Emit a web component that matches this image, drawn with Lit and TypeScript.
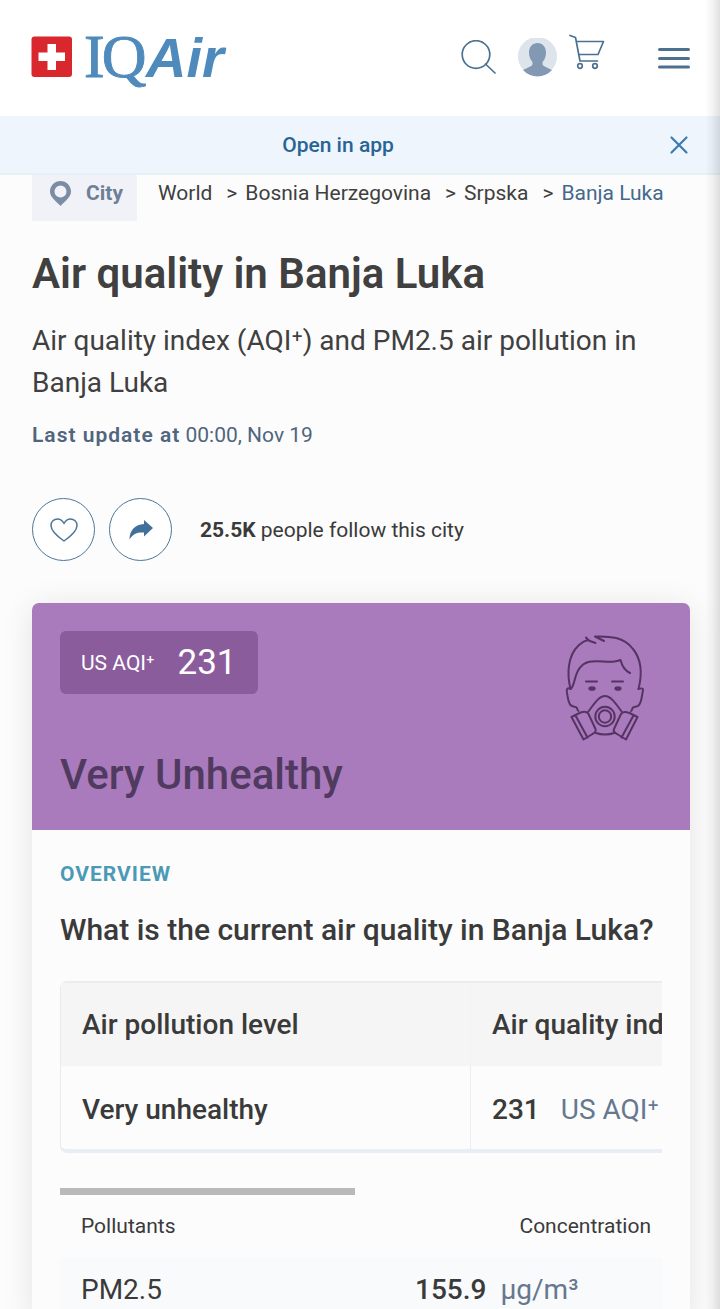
import { LitElement, html, css, svg } from "lit";
import { customElement } from "lit/decorators.js";

const crumbs = ["World", "Bosnia Herzegovina", "Srpska", "Banja Luka"];

@customElement("site-header")
class SiteHeader extends LitElement {
  static styles = css`
    :host { display: block; position: sticky; top: 0; z-index: 2; }
    * { box-sizing: border-box; }
    .bar { height: 116px; background: #fff; display: flex; align-items: center; justify-content: space-between; padding: 0 29px 0 31px; }
    .home { display: block; }
    .logo { display: block; width: 204px; height: 100px; }
    .tools { display: flex; align-items: center; }
    button { border: 0; background: none; padding: 0; display: block; font: inherit; cursor: pointer; }
    svg { display: block; }
    .user { margin-left: 21px; }
    .cart { margin: 0 52px 12px 11px; }
    .banner { min-height: 59px; background: #eef5fd; border-bottom: 2px solid #e9eff6; display: flex; align-items: center; padding: 0 30px 0 8px; }
    .open { flex: 1; text-align: center; font-size: 21px; line-height: 28px; font-weight: 500; color: #286494; text-decoration: none; }
  `;
  render() {
    return html`
      <header class="bar">
        <a class="home" href="#" aria-label="IQAir">
          <svg class="logo" viewBox="0 -20 204 100">
            <rect x="0.500" y="8.500" width="40.500" height="40.500" rx="3" fill="#d9272e" />
            <path d="M16.500 16h8.500v8.500h9V33h-9v9h-8.500v-9h-9v-8.500h9z" fill="#fff" />
            <text y="49" fill="#4f8abc">
              <tspan x="53" dx="0 -3" font-family="Liberation Serif, serif" font-size="62" stroke="#4f8abc" stroke-width="0.900">IQ</tspan><tspan x="115" font-family="Liberation Sans, sans-serif" font-size="56" font-weight="700" font-style="italic">Air</tspan>
            </text>
          </svg>
        </a>
        <div class="tools">
          <button aria-label="Search">
            <svg width="36" height="36" viewBox="0 0 36 36" fill="none" stroke="#4c7190" stroke-width="1.700" stroke-linecap="round">
              <circle cx="15" cy="14.500" r="13.800" /><path d="M24.500 24l9.500 9" />
            </svg>
          </button>
          <button class="user" aria-label="Account">
            <svg width="40" height="40" viewBox="0 0 40 40">
              <circle cx="19.500" cy="18.500" r="19.500" fill="#dde4ec" />
              <path d="M19.500 5c5 0 8.500 4 8.500 9.500 0 4-1.500 7.500-3.500 9.500v2c0 2 3 2.700 9.500 6a19.500 19.500 0 0 1-29 0c6.500-3.300 9.500-4 9.500-6v-2c-2-2-3.500-5.500-3.500-9.500C11 9 14.500 5 19.500 5z" fill="#8298b3" />
            </svg>
          </button>
          <button class="cart" aria-label="Cart">
            <svg width="36" height="36" viewBox="0 0 36 36" fill="none" stroke="#4c7190" stroke-width="1.700" stroke-linecap="round" stroke-linejoin="round">
              <path d="M1 1.500l5.500 2L11 27h17.500M7.500 7.500h27L29 20.500H9.700" />
              <circle cx="11" cy="32" r="2.300" /><circle cx="26" cy="32" r="2.300" />
            </svg>
          </button>
          <button aria-label="Menu">
            <svg width="34" height="24" viewBox="0 0 34 24" stroke="#4c7190" stroke-width="3" stroke-linecap="round">
              <path d="M2.500 3.500h29M2.500 12.500h29M2.500 21h29" />
            </svg>
          </button>
        </div>
      </header>
      <div class="banner">
        <a class="open" href="#">Open in app</a>
        <button aria-label="Close">
          <svg width="22" height="22" viewBox="0 0 22 22" stroke="#3a7cb0" stroke-width="2.200" stroke-linecap="round">
            <path d="M3.500 3.500l15 15M18.500 3.500l-15 15" />
          </svg>
        </button>
      </div>
    `;
  }
}

const maskFace = svg`
  <g fill="none" stroke="#553463" stroke-width="2" stroke-linecap="round" stroke-linejoin="round">
    <path d="M5.500 54C2 40 2 21 14 10c3-2.800 6-4.500 9.500-5.200M21 2.500l2.500 3 7 2.500" />
    <path d="M30 1.500l9 4.500M30 1.500C45 1 59 2 68 14c9 11 9 26 5.500 40" />
    <path d="M5.500 54c5-3 3-16 11-23 8-8 23-3 33-4.500 4-.6 6-1.500 6-1.500 1.500 6 4 10.500 9.500 13" />
    <path d="M5.500 54c-4-2-4 1-3.500 4 1 5 1 9 3.500 12 2 2.500 5 1 6 2.500 1 1 .5 2.500 2 3.500M73.500 54c6-2 4.500 1 4 4-1 5-1 9-3.500 12-2 2.500-4.500 1-6 2.500-1 1-.5 2.500-2 3.500" />
    <path d="M21 46.500h11M47 46.500h11" />
    <path d="M23 77C29 69 34 61 40 61s11 8 17 16M31 98c5 2 13 2 18 0" />
    <path d="M6.500 82l8-4c4-1.500 7.500-2 9 1l7 15c1 2-1 4-3 5l-9 5.500zM72.500 82l-8-4c-4-1.500-7-2-8.500 1l-7 15c-1 2 1 4 3 5l9 5.500z" />
    <path d="M10.500 80.500l12 22M68.500 80.500l-12 22" />
    <circle cx="40" cy="81.500" r="9.700" /><circle cx="40" cy="81.500" r="6.200" />
  </g>
  <ellipse cx="27" cy="53.500" rx="3.600" ry="2.300" fill="#553463" />
  <ellipse cx="53" cy="53.500" rx="3.600" ry="2.300" fill="#553463" />`;

@customElement("aqi-card")
class AqiCard extends LitElement {
  static styles = css`
    :host { display: block; background: #fcfcfc; border-radius: 7px; box-shadow: 0 4px 32px rgba(0, 0, 0, 0.1); color: #3a3a3a; }
    * { box-sizing: border-box; }
    h2, h3, p { margin: 0; }
    .hero { background: #a97abc; border-radius: 7px 7px 0 0; padding: 28px 28px 30px; display: flex; justify-content: space-between; }
    .badge { display: inline-flex; align-items: center; gap: 23px; height: 63px; padding: 0 21px; border-radius: 6px; background: #8a5c9b; color: #fff; font-size: 21px; margin-bottom: 56px; }
    .badge strong { font-size: 35px; font-weight: 400; }
    .level { font-size: 42px; line-height: 50px; font-weight: 500; color: #513a5f; }
    .face { width: 80px; height: 108px; margin: 4px 17px 0 0; flex: none; }
    .body { padding: 30px 28px 0; }
    .kicker { font-size: 21px; line-height: 28px; font-weight: 700; letter-spacing: 1px; color: #4b9ab5; text-transform: uppercase; }
    h3 { font-size: 30px; line-height: 42px; font-weight: 500; margin: 21px 0 30px; }
    table { border-collapse: separate; border-spacing: 0; text-align: left; }
    .scroller { overflow: hidden; }
    .levels { width: 1232px; table-layout: fixed; font-size: 28px; line-height: 42px; border: 1px solid #e8eaee; border-top: 2px solid #ececee; border-bottom: 4px solid #e8edf6; border-radius: 7px; }
    .levels th, .levels td { padding: 21px 21px 20px; font-weight: 500; white-space: nowrap; }
    .levels th { background: #f5f5f5; }
    .levels td { padding: 23px 21px 18px; }
    .levels tr > * + * { border-left: 1px solid #eaeef4; }
    .levels th + th { border-color: #f2f2f2; }
    .levels col.first { width: 409px; }
    .unit { font-weight: 400; color: #667890; margin-left: 14px; }
    .levels .unit { margin-left: 21px; }
    .track { margin-top: 35px; }
    .thumb { width: 49%; height: 7px; background: #b9b9b9; }
    .pollutants { width: 100%; font-size: 28px; line-height: 42px; }
    .pollutants th { font-size: 21px; line-height: 28px; font-weight: 400; padding: 17px 11px 18px 21px; }
    .pollutants th + th { text-align: right; }
    .pollutants td { background: #f9fafc; padding: 11px 21px; }
    .pollutants td b { font-weight: 500; }
    .pollutants col.value { width: 268px; }
  `;
  render() {
    return html`
      <section class="hero">
        <div>
          <p class="badge"><span>US AQI⁺</span><strong>231</strong></p>
          <h2 class="level">Very Unhealthy</h2>
        </div>
        <svg class="face" viewBox="0 0 80 108" overflow="visible" aria-hidden="true">${maskFace}</svg>
      </section>
      <section class="body">
        <p class="kicker">Overview</p>
        <h3>What is the current air quality in Banja Luka?</h3>
        <div class="scroller">
          <table class="levels">
            <colgroup><col class="first" /><col /></colgroup>
            <thead><tr><th>Air pollution level</th><th>Air quality index</th></tr></thead>
            <tbody><tr><td>Very unhealthy</td><td>231<span class="unit">US AQI⁺</span></td></tr></tbody>
          </table>
        </div>
        <div class="track"><div class="thumb"></div></div>
        <table class="pollutants">
          <colgroup><col /><col class="value" /></colgroup>
          <thead><tr><th>Pollutants</th><th>Concentration</th></tr></thead>
          <tbody><tr><td>PM2.5</td><td><b>155.9</b><span class="unit">µg/m³</span></td></tr></tbody>
        </table>
      </section>
    `;
  }
}

@customElement("app-root")
class AppRoot extends LitElement {
  static styles = css`
    :host { display: block; min-height: 100vh; background: #fcfcfc; font-family: Roboto, sans-serif; color: #404040; font-size: 21px; line-height: 28px; }
    * { box-sizing: border-box; }
    main { padding: 0 30px 0 32px; }
    .where { display: flex; align-items: center; }
    .tag { display: flex; align-items: center; gap: 15px; padding: 4px 14px 14px 18px; background: #f1f2f7; color: #6e8098; font-weight: 700; }
    .tag svg { display: block; }
    ol { display: flex; list-style: none; margin: 0 0 10px; padding: 0 0 0 21px; white-space: nowrap; }
    li + li::before { content: ">"; margin: 0 8px 0 14px; }
    ol a { color: inherit; text-decoration: none; }
    li:last-child a { color: #44698c; }
    h1 { font-size: 42px; line-height: 50px; font-weight: 600; margin: 28px 0 21px; }
    p { margin: 0; }
    .lead { font-size: 28px; line-height: 42px; }
    .updated { margin-top: 17px; color: #50657e; }
    .updated b { font-weight: 600; letter-spacing: 1px; }
    .actions { display: flex; align-items: center; gap: 14px; margin: 49px 0 42px; }
    .round { width: 63px; height: 63px; border: 1px solid #4d7698; border-radius: 50%; background: #fff; display: grid; place-items: center; padding: 0; cursor: pointer; }
    .actions p { margin-left: 14px; color: #3a3a3a; }
    .actions b { font-weight: 700; }
    .edge { position: fixed; top: 0; right: 0; bottom: 0; width: 15px; z-index: 3; pointer-events: none; background: linear-gradient(90deg, rgba(0, 0, 0, 0), rgba(0, 0, 0, 0.04) 45%, rgba(0, 0, 0, 0.12)); }
  `;
  render() {
    return html`
      <site-header></site-header>
      <main>
        <nav class="where" aria-label="Breadcrumb">
          <span class="tag">
            <svg width="21" height="25" viewBox="0 0 21 25">
              <path fill-rule="evenodd" d="M10.500 0C4.700 0 0 4.700 0 10.500c0 6 6.500 10 10.500 14.500C14.500 20.500 21 16.500 21 10.500 21 4.700 16.300 0 10.500 0zm0 4.500a6 6 0 1 1 0 12 6 6 0 0 1 0-12z" fill="#7b8da5" />
            </svg>
            City
          </span>
          <ol>${crumbs.map((name) => html`<li><a href="#">${name}</a></li>`)}</ol>
        </nav>
        <h1>Air quality in Banja Luka</h1>
        <p class="lead">Air quality index (AQI⁺) and PM2.5 air pollution in Banja Luka</p>
        <p class="updated"><b>Last update at</b> 00:00, Nov 19</p>
        <div class="actions">
          <button class="round" aria-label="Follow">
            <svg width="28" height="24" viewBox="0 0 28 24" fill="none" stroke="#4d7698" stroke-width="1.500" stroke-linejoin="round">
              <path d="M14 23C9 19.500 1 13.500 1 7.500 1 3.500 4 1 7.500 1c3 0 5 1.700 6.500 4.500C15.500 2.700 17.500 1 20.500 1 24 1 27 3.500 27 7.500 27 13.500 19 19.500 14 23z" />
            </svg>
          </button>
          <button class="round" aria-label="Share">
            <svg width="24" height="20" viewBox="0 0 24 20" fill="#41719b">
              <path d="M15 0l9 8-9 8.500V12.500C9 12 4 13.500.500 19.500.500 10.500 6 4.500 15 4z" />
            </svg>
          </button>
          <p><b>25.5K</b> people follow this city</p>
        </div>
        <aqi-card></aqi-card>
      </main>
      <div class="edge"></div>
    `;
  }
}
